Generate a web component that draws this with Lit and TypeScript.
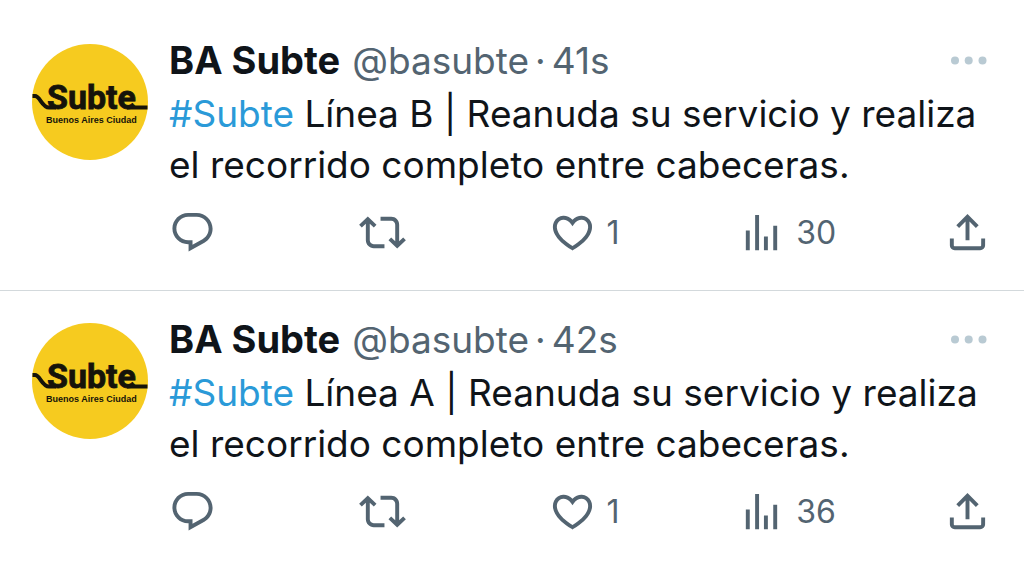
import { LitElement, html, css, svg } from "lit";
import { customElement, property } from "lit/decorators.js";

interface Post {
  line: string;
  age: string;
  likes: number;
  views: number;
}

const posts: Post[] = [
  { line: "B", age: "41s", likes: 1, views: 30 },
  { line: "A", age: "42s", likes: 1, views: 36 },
];

const icons = {
  reply: "M1.751 10c0-4.42 3.584-8 8.005-8h4.366c4.49 0 8.129 3.64 8.129 8.13 0 2.96-1.607 5.68-4.196 7.11l-8.054 4.46v-3.69h-.067c-4.49.1-8.183-3.51-8.183-8.01zm8.005-6c-3.317 0-6.005 2.69-6.005 6 0 3.37 2.77 6.08 6.138 6.01l.351-.01h1.761v2.3l5.087-2.81c1.951-1.08 3.163-3.13 3.163-5.36 0-3.39-2.744-6.13-6.129-6.13H9.756z",
  repost: "M4.5 3.88l4.432 4.14-1.364 1.46L5.5 7.55V16c0 1.1.896 2 2 2H13v2H7.5c-2.209 0-4-1.79-4-4V7.55L1.432 9.48.068 8.02 4.5 3.88zM16.5 6H11V4h5.5c2.209 0 4 1.79 4 4v8.45l2.068-1.93 1.364 1.46-4.432 4.14-4.432-4.14 1.364-1.46 2.068 1.93V8c0-1.1-.896-2-2-2z",
  like: "M16.697 5.5c-1.222-.06-2.679.51-3.89 2.16l-.805 1.09-.806-1.09C9.984 6.01 8.526 5.44 7.304 5.5c-1.243.07-2.349.78-2.91 1.91-.552 1.12-.633 2.78.479 4.82 1.074 1.97 3.257 4.27 7.129 6.61 3.87-2.34 6.052-4.64 7.126-6.61 1.111-2.04 1.03-3.7.477-4.82-.561-1.13-1.666-1.84-2.908-1.91zm4.187 7.69c-1.351 2.48-4.001 5.12-8.379 7.67l-.503.3-.504-.3c-4.379-2.55-7.029-5.19-8.382-7.67-1.36-2.5-1.41-4.86-.514-6.67.887-1.79 2.647-2.91 4.601-3.01 1.651-.09 3.368.56 4.798 2.01 1.429-1.45 3.146-2.1 4.796-2.01 1.954.1 3.714 1.22 4.601 3.01.896 1.81.846 4.17-.514 6.67z",
  views: "M8.75 21V3h2v18h-2zM18 21V8.5h2V21h-2zM4 21l.004-10h2L6 21H4zm9.248 0v-7h2v7h-2z",
  share: "M12 2.59l5.7 5.7-1.41 1.42L13 6.41V16h-2V6.41l-3.3 3.3-1.41-1.42L12 2.59zM21 15l-.02 3.51c0 1.38-1.12 2.49-2.5 2.49H5.5C4.11 21 3 19.88 3 18.5V15h2v3.5c0 .28.22.5.5.5h12.98c.28 0 .5-.22.5-.5L19 15h2z",
};

const icon = (name: keyof typeof icons) => html`
  <svg class="icon" viewBox="0 0 24 24" aria-hidden="true">${svg`<path d=${icons[name]}></path>`}</svg>
`;

@customElement("subte-post")
class SubtePost extends LitElement {
  @property({ attribute: false }) post!: Post;

  static styles = css`
    :host {
      display: block;
    }
    .post {
      display: flex;
      align-items: flex-start;
      gap: 21px;
      padding: 23px 33px 34px 32px;
    }
    .avatar {
      flex: none;
      display: block;
      margin-top: 9px;
    }
    .logo {
      display: block;
      width: 116px;
      height: 116px;
    }
    .wordmark {
      font: 700 34px Roboto, sans-serif;
    }
    .tagline {
      font: 700 9px "Liberation Sans", sans-serif;
    }
    .body {
      flex: 1;
      min-width: 0;
    }
    .head {
      display: flex;
      align-items: center;
      justify-content: space-between;
      margin-bottom: 2px;
    }
    .byline {
      display: flex;
      gap: 12px;
      line-height: 51px;
      font-size: 37px;
      color: #536471;
    }
    .name {
      font-size: 38px;
      font-weight: 700;
      color: #0f1419;
      text-decoration: none;
    }
    .handle {
      color: inherit;
      text-decoration: none;
    }
    .meta {
      display: flex;
      gap: 6px;
    }
    .text {
      margin: 0;
      line-height: 51px;
      font-size: 37px;
      color: #0f1419;
    }
    .tag {
      color: #2a9ad8;
      text-decoration: none;
    }
    .actions {
      display: grid;
      grid-template-columns: repeat(4, 1fr) auto;
      margin-top: 19px;
    }
    .action {
      display: flex;
      align-items: center;
      gap: 11px;
      justify-self: start;
      margin: 0;
      padding: 0;
      border: 0;
      background: none;
      font: inherit;
      font-size: 32px;
      line-height: 47px;
      color: #536471;
      cursor: pointer;
    }
    .share {
      margin-left: 16px;
    }
    .more {
      color: #b9cad3;
    }
    .icon {
      display: block;
      width: 47px;
      height: 47px;
      fill: currentColor;
    }
  `;

  render() {
    const { line, age, likes, views } = this.post;
    const message = ` Línea ${line} | Reanuda su servicio y realiza el recorrido completo entre cabeceras.`;
    return html`
      <article class="post">
        <a class="avatar" href="#basubte" aria-label="BA Subte">
          <svg class="logo" viewBox="0 0 116 116" aria-hidden="true">
            <circle cx="58" cy="58" r="58" fill="#f6cb1f"></circle>
            <path d="M0.500 52H3C8 52 10 63.500 17 63.500H24M95 63.500H115.500" fill="none" stroke="#15130a" stroke-width="4"></path>
            <text class="wordmark" x="15" y="65" fill="#15130a" stroke="#15130a" stroke-width="0.800">Subte</text>
            <text class="tagline" x="14" y="79" fill="#15130a">Buenos Aires Ciudad</text>
          </svg>
        </a>
        <div class="body">
          <header class="head">
            <div class="byline">
              <a class="name" href="#basubte">BA Subte</a>
              <span class="meta">
                <a class="handle" href="#basubte">@basubte</a>
                <span>·</span>
                <time>${age}</time>
              </span>
            </div>
            <button class="action more" aria-label="Más opciones">
              <svg class="icon" viewBox="0 0 47 47" aria-hidden="true">
                <circle cx="11" cy="23.500" r="4"></circle>
                <circle cx="24.700" cy="23.500" r="4"></circle>
                <circle cx="38.500" cy="23.500" r="4"></circle>
              </svg>
            </button>
          </header>
          <p class="text"><a class="tag" href="#subte">#Subte</a>${message}</p>
          <div class="actions">
            <button class="action" aria-label="Responder">${icon("reply")}</button>
            <button class="action" aria-label="Repostear">${icon("repost")}</button>
            <button class="action">${icon("like")}<span>${likes}</span></button>
            <button class="action">${icon("views")}<span>${views}</span></button>
            <button class="action share" aria-label="Compartir">${icon("share")}</button>
          </div>
        </div>
      </article>
    `;
  }
}

@customElement("app-root")
class AppRoot extends LitElement {
  static styles = css`
    :host {
      display: block;
      min-height: 100vh;
      background: #fff;
      font-family: Inter, sans-serif;
    }
    .feed {
      padding-top: 12px;
    }
    .item + .item {
      border-top: 1px solid #d3d9dc;
    }
  `;

  render() {
    return html`
      <main class="feed">
        ${posts.map((post) => html`<subte-post class="item" .post=${post}></subte-post>`)}
      </main>
    `;
  }
}
